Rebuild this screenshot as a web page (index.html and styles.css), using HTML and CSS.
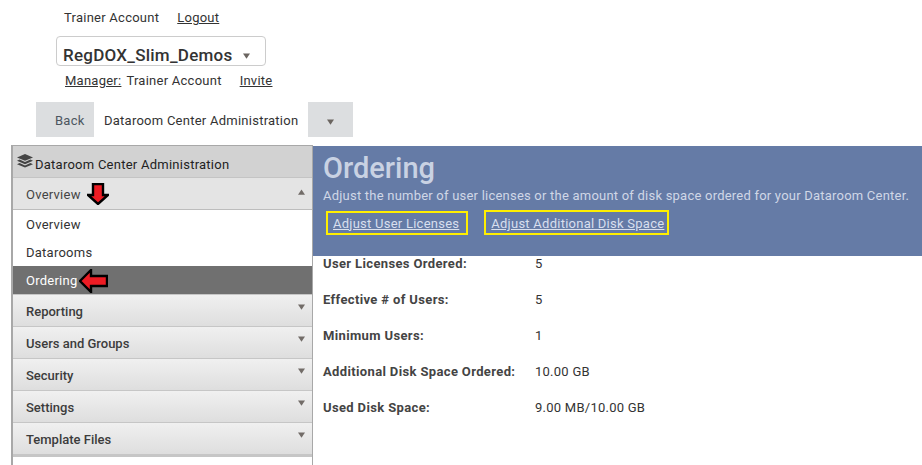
FILE: index.html
```html
<!DOCTYPE html>
<html lang="en">
<head>
<meta charset="utf-8">
<title>Ordering</title>
<link rel="stylesheet" href="styles.css">
</head>
<body>
<header class="top">
  <div class="user-line"><span>Trainer Account</span><a href="#">Logout</a></div>
  <div class="room-select"><span>RegDOX_Slim_Demos</span><svg class="tri-sel select-tri" viewBox="0 0 8 6"><path d="M0 0H8L4 6Z"/></svg></div>
  <div class="manager-line"><a href="#">Manager:</a><span class="mgr-name">Trainer Account</span><a href="#" class="invite">Invite</a></div>
  <nav class="crumbs">
    <a class="back" href="#">Back</a>
    <span class="crumb-title">Dataroom Center Administration</span>
    <span class="crumb-menu"><svg class="tri-sel" viewBox="0 0 8 6"><path d="M0 0H8L4 6Z"/></svg></span>
  </nav>
</header>
<div class="layout">
  <aside class="side">
    <div class="side-title">
      <svg class="layers" viewBox="0 0 16 14"><path d="M8 0L16 3.4L8 6.8L0 3.4Z"/><path d="M2.6 5.6L8 8L13.4 5.6L16 6.8L8 10.2L0 6.8Z"/><path d="M2.6 9L8 11.4L13.4 9L16 10.2L8 13.6L0 10.2Z"/></svg>
      <span>Dataroom Center Administration</span>
    </div>
    <div class="acc acc-open"><span>Overview</span>
      <svg class="arrow arrow-down" viewBox="0 0 22 22"><path d="M6 1H16V12H21L11 21L1 12H6Z"/></svg>
      <svg class="tri" viewBox="0 0 8 6"><path d="M0 6H8L4 0Z"/></svg>
    </div>
    <ul class="sub">
      <li>Overview</li>
      <li>Datarooms</li>
      <li class="current">Ordering
        <svg class="arrow arrow-left" viewBox="0 0 29 24"><path d="M1 12L12 1V7H28V17H12V23Z"/></svg>
      </li>
    </ul>
    <div class="acc"><span>Reporting</span><svg class="tri" viewBox="0 0 8 6"><path d="M0 0H8L4 6Z"/></svg></div>
    <div class="acc"><span>Users and Groups</span><svg class="tri" viewBox="0 0 8 6"><path d="M0 0H8L4 6Z"/></svg></div>
    <div class="acc"><span>Security</span><svg class="tri" viewBox="0 0 8 6"><path d="M0 0H8L4 6Z"/></svg></div>
    <div class="acc"><span>Settings</span><svg class="tri" viewBox="0 0 8 6"><path d="M0 0H8L4 6Z"/></svg></div>
    <div class="acc acc-last"><span>Template Files</span><svg class="tri" viewBox="0 0 8 6"><path d="M0 0H8L4 6Z"/></svg></div>
  </aside>
  <main class="main">
    <section class="banner">
      <h1>Ordering</h1>
      <p>Adjust the number of user licenses or the amount of disk space ordered for your Dataroom Center.</p>
      <div class="actions">
        <a href="#" class="act act-one">Adjust User Licenses</a>
        <a href="#" class="act act-two">Adjust Additional Disk Space</a>
      </div>
    </section>
    <dl class="facts">
      <div><dt>User Licenses Ordered:</dt><dd>5</dd></div>
      <div><dt>Effective # of Users:</dt><dd>5</dd></div>
      <div><dt>Minimum Users:</dt><dd>1</dd></div>
      <div><dt>Additional Disk Space Ordered:</dt><dd>10.00 GB</dd></div>
      <div><dt>Used Disk Space:</dt><dd>9.00 MB/10.00 GB</dd></div>
    </dl>
  </main>
</div>
</body>
</html>
```
FILE: styles.css
```css
* { box-sizing: border-box; }
html, body { margin: 0; height: 465px; overflow: hidden; background: #fff; }
body { font-family: Roboto, "Liberation Sans", sans-serif; font-size: 13px; color: #333; letter-spacing: 0.25px; }
a { color: inherit; }

.top { height: 145px; padding-top: 9px; }
.user-line { height: 17px; line-height: 17px; padding-left: 64px; display: flex; gap: 18px; }
.room-select { width: 210px; height: 30px; margin: 10px 0 0 56px; border: 1px solid #ccc; border-radius: 4px; padding: 8px 0 0 6px; display: flex; align-items: flex-start; font-size: 17px; font-weight: 500; line-height: 20px; color: #333; letter-spacing: 0.25px; }
.tri-sel { width: 7px; height: 6px; fill: #6b6560; }
.select-tri { margin: 8px 0 0 13px; margin-left: 11px; }
.manager-line { height: 17px; line-height: 17px; margin-top: 6px; padding-left: 65px; display: flex; }
.mgr-name { margin-left: 5px; }
.invite { margin-left: 18px; }
.crumbs { height: 35px; margin: 13px 0 0 36px; display: flex; align-items: center; }
.back { width: 58px; height: 35px; line-height: 37px; background: #dcdee0; color: #4c5660; text-decoration: none; padding-left: 19px; }
.crumb-title { width: 214px; padding-left: 10px; position: relative; top: 1px; }
.crumb-menu { width: 45px; height: 35px; background: #dcdee0; display: flex; align-items: center; justify-content: center; padding-top: 4px; }

.layout { display: flex; height: 320px; padding-left: 11px; }
.side { width: 302px; flex: none; border: 1px solid #a8a8a8; border-width: 1px 1px 0 2px; background: #fff; }
.side-title { height: 32px; background: #d2d2d2; display: flex; align-items: center; color: #222; padding: 5px 0 0 4px; border-bottom: 1px solid #c4c4c4; }
.layers { width: 16px; height: 14px; fill: #444; margin: -7px 2px 0 0; flex: none; }
.acc { height: 32px; position: relative; background: linear-gradient(#f0f0f0, #dedede); border-bottom: 1px solid #c6c6c6; padding-left: 13px; line-height: 33px; color: #3c3c3c; font-weight: 500; letter-spacing: 0; }
.acc-open { background: #e4e4e4; color: #444; font-weight: 400; letter-spacing: 0.25px; border-bottom-color: #bdbdbd; }
.acc-last { height: 34px; border-bottom: 3px solid #c6c6c6; line-height: 34px; }
.tri { position: absolute; right: 7px; top: 9px; width: 7px; height: 6px; fill: #726c68; }
.acc-open .tri { top: 11px; }
.sub { list-style: none; margin: 0; padding: 0; }
.sub li { height: 28px; line-height: 29px; padding-left: 13px; color: #333; }
.sub .current { background: #707070; color: #fff; position: relative; height: 29px; border-bottom: 1px solid #c6c6c6; }
.arrow { position: absolute; fill: #ed1c24; stroke: #000; stroke-width: 2.4; }
.arrow-down { left: 74px; top: 5px; width: 22px; height: 22px; }
.arrow-left { left: 66px; top: 3px; width: 29px; height: 24px; }

.main { flex: 1; min-width: 0; padding-top: 1px; }
.banner { height: 110px; background: #657ba6; color: #d0d7e6; padding: 5px 10px 0; }
.banner h1 { margin: 0; font-size: 29px; line-height: 34px; font-weight: 500; letter-spacing: 0; color: #c9d2e3; }
.banner p { margin: 3px 0 0; line-height: 16px; letter-spacing: 0.22px; }
.actions { display: flex; margin: 6px 0 0 3px; align-items: center; }
.act { display: block; border: 2px solid #ffef00; height: 25px; line-height: 23px; color: #d8dfee; white-space: nowrap; }
.act-one { padding: 0 7px 0 5px; height: 24px; line-height: 22px; }
.act-two { margin-left: 16px; padding: 0 3px 0 5px; }

.facts { margin: 0; padding: 0 0 0 10px; }
.facts div { display: flex; height: 36px; line-height: 16px; }
.facts dt { width: 212px; font-weight: 700; color: #444; letter-spacing: 0.36px; }
.facts dd { margin: 0; color: #333; }
```
